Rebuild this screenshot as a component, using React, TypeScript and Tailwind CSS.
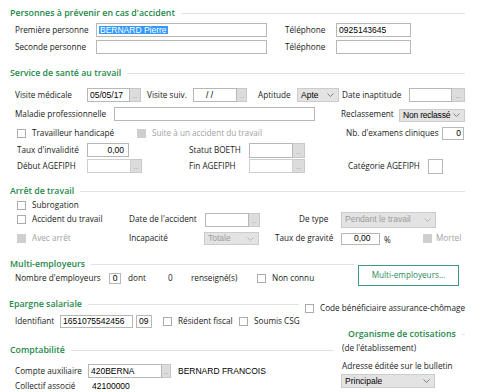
import React from "react";

type P = { className?: string; children?: React.ReactNode };

function Sec({ title, className = "" }: { title: string; className?: string }) {
  return (
    <div className={`flex h-[12px] items-center ${className}`}>
      <span className="whitespace-nowrap text-[8.8px] font-semibold text-[#25894b]">{title}</span>
      <div className="ml-[6px] h-px flex-1 bg-[#e2e2e2]" />
    </div>
  );
}

function Box({ className = "", children }: P) {
  return (
    <div
      className={`flex shrink-0 items-center overflow-hidden whitespace-nowrap border border-[#b7b7b7] bg-white px-[2px] font-['Liberation_Sans'] text-[8.5px] text-black ${className}`}
    >
      {children}
    </div>
  );
}

function Dots({ className = "" }: P) {
  return (
    <div
      className={`flex shrink-0 items-end justify-center border border-l-0 border-[#c8c8c8] bg-[#dcdcdc] pb-[2px] text-[6px] leading-none text-[#8c8c8c] ${className}`}
    >
      ...
    </div>
  );
}

function Chevron({ light }: { light?: boolean }) {
  return (
    <svg width="7" height="4" viewBox="0 0 7 4" className="shrink-0">
      <path d="M0.5 0.5 L3.5 3.5 L6.5 0.5" stroke={light ? "#b0b0b0" : "#777"} fill="none" strokeWidth="0.9" />
    </svg>
  );
}

function Select({ className = "", children, disabled }: P & { disabled?: boolean }) {
  return (
    <div
      className={`flex shrink-0 items-center justify-between whitespace-nowrap border border-[#cccccc] bg-[#e3e3e3] pl-[3px] pr-[4px] font-['Liberation_Sans'] text-[8.5px] ${
        disabled ? "text-[#9c9c9c]" : "text-black"
      } ${className}`}
    >
      <span>{children}</span>
      <Chevron light={disabled} />
    </div>
  );
}

function Cb({ disabled, className = "" }: { disabled?: boolean; className?: string }) {
  return (
    <div
      className={`h-[9px] w-[9px] shrink-0 border ${
        disabled ? "border-[#cfcfcf] bg-[#cfcfcf]" : "border-[#ababab] bg-white"
      } ${className}`}
    />
  );
}

function L({ className = "", children }: P) {
  return <span className={`shrink-0 whitespace-nowrap ${className}`}>{children}</span>;
}

export default function App() {
  return (
    <div className="h-[392px] w-[485px] overflow-hidden bg-white font-['Open_Sans'] text-[8.2px] leading-none text-[#1a1a1a]">
      <div className="flex flex-col pt-[7px]">
        {/* Personnes à prévenir */}
        <Sec title="Personnes à prévenir en cas d'accident" className="pl-[10px] pr-[20px]" />
        <div className="mt-[4px] flex h-[14px] items-center pl-[15px]">
          <L className="w-[81px]">Première personne</L>
          <Box className="h-[14px] w-[171px]">
            <span className="bg-[#3399ff] px-[1px] text-white">BERNARD Pierre</span>
          </Box>
          <L className="ml-[18px] w-[51px]">Téléphone</L>
          <Box className="h-[14px] w-[75px]">0925143645</Box>
        </div>
        <div className="mt-[3px] flex h-[14px] items-center pl-[15px]">
          <L className="w-[81px]">Seconde personne</L>
          <Box className="h-[14px] w-[171px]" />
          <L className="ml-[18px] w-[51px]">Téléphone</L>
          <Box className="h-[14px] w-[75px]" />
        </div>

        {/* Service de santé */}
        <Sec title="Service de santé au travail" className="mt-[13px] pl-[10px] pr-[20px]" />
        <div className="mt-[9px] flex h-[14px] items-center pl-[15px]">
          <L className="w-[72px]">Visite médicale</L>
          <div className="flex shrink-0">
            <Box className="h-[14px] w-[43px]">05/05/17</Box>
            <Dots className="h-[14px] w-[11px]" />
          </div>
          <L className="ml-[6px] w-[46px]">Visite suiv.</L>
          <div className="flex shrink-0">
            <Box className="h-[14px] w-[44px] pl-[12px]">/ /</Box>
            <Dots className="h-[14px] w-[10px]" />
          </div>
          <L className="ml-[11px] w-[39px]">Aptitude</L>
          <Select className="h-[14px] w-[42px]">Apte</Select>
          <L className="ml-[3px] w-[67px]">Date inaptitude</L>
          <div className="flex shrink-0">
            <Box className="h-[14px] w-[43px]" />
            <Dots className="h-[14px] w-[13px]" />
          </div>
        </div>
        <div className="mt-[5px] flex h-[14px] items-center pl-[15px]">
          <L className="w-[99px]">Maladie professionnelle</L>
          <Box className="h-[14px] w-[201px]" />
          <L className="ml-[26px] w-[58px]">Reclassement</L>
          <Select className="mt-[2px] h-[13px] w-[66px] pl-[2px] pr-[2px] text-[7.8px] tracking-[-0.2px]">
            Non reclassé
          </Select>
        </div>
        <div className="mt-[6px] flex h-[13px] items-center pl-[17px]">
          <Cb />
          <L className="ml-[6px] w-[105px]">Travailleur handicapé</L>
          <Cb disabled />
          <L className="ml-[6px] w-[194px] text-[#a2a2a2]">Suite à un accident du travail</L>
          <L className="w-[96px]">Nb. d'examens cliniques</L>
          <Box className="h-[13px] w-[22px] justify-end">0</Box>
        </div>
        <div className="mt-[3px] flex h-[14px] items-center pl-[17px]">
          <L className="w-[70px]">Taux d'invalidité</L>
          <Box className="h-[14px] w-[42px] justify-end pr-[4px]">0,00</Box>
          <L className="ml-[60px] w-[60px]">Statut BOETH</L>
          <div className="flex shrink-0">
            <Box className="h-[15px] w-[44px]" />
            <Dots className="h-[15px] w-[12px]" />
          </div>
        </div>
        <div className="mt-[2px] flex h-[14px] items-center pl-[17px]">
          <L className="w-[70px]">Début AGEFIPH</L>
          <div className="flex shrink-0">
            <Box className="h-[14px] w-[44px] border-[#cfcfcf]" />
            <Dots className="h-[14px] w-[11px]" />
          </div>
          <L className="ml-[47px] w-[60px]">Fin AGEFIPH</L>
          <div className="flex shrink-0">
            <Box className="h-[14px] w-[44px] border-[#cfcfcf]" />
            <Dots className="h-[14px] w-[12px]" />
          </div>
          <L className="ml-[43px] w-[80px]">Catégorie AGEFIPH</L>
          <Box className="h-[15px] w-[15px]" />
        </div>

        {/* Arrêt de travail */}
        <Sec title="Arrêt de travail" className="mt-[12px] pl-[10px] pr-[20px]" />
        <div className="mt-[3px] flex h-[11px] items-center pl-[17px]">
          <Cb />
          <L className="ml-[6px]">Subrogation</L>
        </div>
        <div className="mt-[1px] flex h-[15px] items-center pl-[17px]">
          <Cb />
          <L className="ml-[6px] w-[97px]">Accident du travail</L>
          <L className="w-[76px]">Date de l'accident</L>
          <div className="flex shrink-0">
            <Box className="h-[14px] w-[44px]" />
            <Dots className="h-[14px] w-[11px]" />
          </div>
          <L className="ml-[39px] w-[42px]">De type</L>
          <Select disabled className="h-[16px] w-[95px]">
            Pendant le travail
          </Select>
        </div>
        <div className="mt-[4px] flex h-[15px] items-center pl-[17px]">
          <Cb disabled />
          <L className="ml-[6px] w-[97px] text-[#a2a2a2]">Avec arrêt</L>
          <L className="w-[75px]">Incapacité</L>
          <Select disabled className="h-[13px] w-[55px]">
            Totale
          </Select>
          <L className="ml-[16px] w-[66px]">Taux de gravité</L>
          <Box className="h-[12px] w-[39px] pl-[12px]">0,00</Box>
          <L className="ml-[4px] mt-[4px] w-[39px]">%</L>
          <Cb disabled />
          <L className="ml-[4px] text-[#a2a2a2]">Mortel</L>
        </div>

        {/* Multi-employeurs */}
        <div className="mt-[12px] flex">
          <div className="flex w-[358px] flex-col">
            <Sec title="Multi-employeurs" className="pl-[10px] pr-[4px]" />
            <div className="mt-[2px] flex h-[12px] items-center pl-[15px]">
              <L className="w-[94px]">Nombre d'employeurs</L>
              <Box className="h-[11px] w-[12px] justify-center px-0">0</Box>
              <L className="ml-[7px] w-[40px]">dont</L>
              <L className="w-[23px]">0</L>
              <L className="w-[66px]">renseigné(s)</L>
              <Cb />
              <L className="ml-[6px]">Non connu</L>
            </div>
          </div>
          <div className="mt-[7px] flex h-[21px] w-[101px] items-center justify-center border border-[#3f9686] text-[#2c8a5c]">
            Multi-employeurs...
          </div>
        </div>

        {/* Epargne salariale */}
        <div className="mt-[12px] flex h-[12px] items-start">
          <Sec title="Epargne salariale" className="w-[299px] pl-[9px]" />
          <div className="ml-[6px] mt-[5px] flex h-[10px] items-center">
            <Cb />
            <L className="ml-[6px]">Code bénéficiaire assurance-chômage</L>
          </div>
        </div>
        <div className="mt-[5px] flex h-[13px] items-center pl-[15px]">
          <L className="w-[45px]">Identifiant</L>
          <Box className="h-[13px] w-[73px]">1651075542456</Box>
          <Box className="ml-[3px] h-[13px] w-[16px]">09</Box>
          <Cb className="ml-[11px]" />
          <L className="ml-[6px] w-[61px]">Résident fiscal</L>
          <Cb />
          <L className="ml-[6px]">Soumis CSG</L>
        </div>

        {/* Comptabilité / Organisme */}
        <div className="flex">
          <div className="flex w-[334px] flex-col">
            <Sec title="Comptabilité" className="mt-[16px] pl-[10px]" />
            <div className="mt-[8px] flex h-[14px] items-center pl-[15px]">
              <L className="w-[73px]">Compte auxiliaire</L>
              <div className="flex shrink-0">
                <Box className="h-[14px] w-[74px]">420BERNA</Box>
                <Dots className="h-[14px] w-[9px]" />
              </div>
              <L className="ml-[7px] font-['Liberation_Sans'] text-[8.5px] text-black">BERNARD FRANCOIS</L>
            </div>
            <div className="mt-[2px] flex h-[12px] items-center pl-[15px]">
              <L className="w-[73px]">Collectif associé</L>
              <L className="pl-[4px] font-['Liberation_Sans'] text-[8.5px] text-black">42100000</L>
            </div>
          </div>
          <div className="ml-[8px] flex w-[123px] flex-col">
            <Sec title="Organisme de cotisations" className="pl-[6px]" />
            <div className="mt-[2px] flex h-[12px] items-center">(de l'établissement)</div>
            <div className="mt-[6px] flex h-[12px] items-center">Adresse éditée sur le bulletin</div>
            <Select className="-ml-[1px] mt-[2px] h-[14px] w-[94px]">Principale</Select>
          </div>
        </div>
      </div>
    </div>
  );
}
